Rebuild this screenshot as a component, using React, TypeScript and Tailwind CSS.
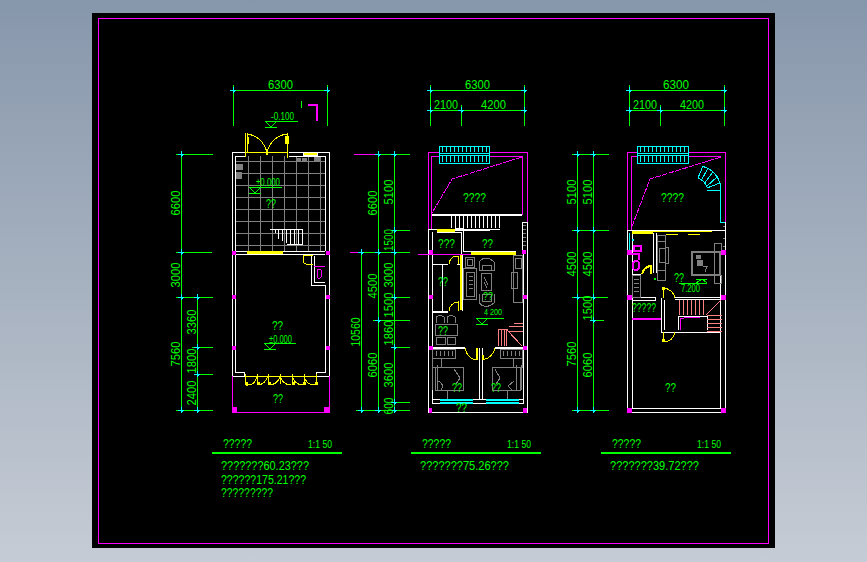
import React from 'react';

const GREEN = '#00ff00';
const CYAN = '#00ffff';
const MAGENTA = '#ff00ff';
const YELLOW = '#ffff00';
const WHITE = '#ffffff';
const GRAY = '#808080';
const PINK = '#ff8080';

function P({ d, c, w = 1, dash }: { d: string; c: string; w?: number; dash?: string }) {
  return <path d={d} stroke={c} strokeWidth={w} strokeDasharray={dash} fill="none" />;
}

function Box({ x, y, w, h, c }: { x: number; y: number; w: number; h: number; c: string }) {
  return <rect x={x} y={y} width={w} height={h} fill={c} />;
}

// horizontal text, x is the left edge and y the baseline
function T({ x, y, w, s = 13, children }: { x: number; y: number; w: number; s?: number; children: string }) {
  return (
    <text x={x} y={y} fontSize={s} fill={GREEN} textLength={w} lengthAdjust="spacingAndGlyphs">
      {children}
    </text>
  );
}

// rotated dimension text
function R({ x, y, len = 25, s = 13, children }: { x: number; y: number; len?: number; s?: number; children: string }) {
  return (
    <text
      x={x}
      y={y + s * 0.36}
      fontSize={s}
      fill={GREEN}
      textAnchor="middle"
      textLength={len}
      lengthAdjust="spacingAndGlyphs"
      transform={`rotate(-90 ${x} ${y})`}
    >
      {children}
    </text>
  );
}

function Ticks({ pts }: { pts: number[][] }) {
  return (
    <g>
      {pts.map(([x, y], i) => (
        <g key={i}>
          <P d={`M${x - 3} ${y}H${x + 3}M${x} ${y - 3}V${y + 3}`} c={CYAN} />
          <Box x={x} y={y} w={2} h={2} c={CYAN} />
        </g>
      ))}
    </g>
  );
}

function Level({ x, y, w }: { x: number; y: number; w: number }) {
  return (
    <P c={GREEN} d={`M${x} ${y}H${x + w}M${x} ${y}L${x + 6} ${y + 6}L${x + 12} ${y}M${x} ${y + 6}H${x + 12}`} />
  );
}

function AwningWindow({ x, w }: { x: number; w: number }) {
  const stripes = [];
  for (let i = x + 3; i < x + w - 2; i += 4) stripes.push(i);
  return (
    <g>
      <rect x={x} y={146} width={w} height={17} fill="#000" stroke={CYAN} />
      <P c={CYAN} d={`M${x} 153H${x + w}M${x} 155H${x + w}`} />
      <P c={CYAN} d={stripes.map((i) => `M${i} 147V152M${i} 156V162`).join('')} />
    </g>
  );
}

function Title({ x, lineX, scaleX }: { x: number; lineX: number; scaleX: number }) {
  return (
    <g>
      <T x={x} y={448} w={29}>?????</T>
      <T x={scaleX} y={448} w={24} s={11}>1:1 50</T>
      <Box x={lineX} y={452} w={130} h={2} c={GREEN} />
    </g>
  );
}

function LeftPlan() {
  return (
    <g>
      {/* floor tiles */}
      <P
        c={GRAY}
        d="M248 156V251M260 156V251M272 156V251M284 156V251M296 156V251M308 156V251M320 156V251M236 161H325M236 173H325M236 185H325M236 197H325M236 209H325M236 221H325M236 233H325M236 245H325"
      />
      <Box x={236} y={164} w={7} h={6} c={GRAY} />
      <Box x={236} y={172} w={6} h={7} c={GRAY} />
      <Box x={296} y={158} w={5} h={4} c={GRAY} />
      <Box x={302} y={158} w={5} h={3} c={GRAY} />
      <Box x={314} y={157} w={7} h={5} c={GRAY} />
      {/* walls */}
      <P
        c={WHITE}
        d="M245 152H232V376M245 156H235V372H244V376M289 152H329V376M289 156H325V251M235 251H325M235 254H325M325 285V372H316V376M232 376H329M311 256V285H325M314 256V282H325"
      />
      <Box x={303} y={152} w={15} h={4} c={WHITE} />
      <Box x={304} y={153} w={13} h={2} c={YELLOW} />
      <Box x={247} y={251} w={36} h={3} c={YELLOW} />
      {/* entry door */}
      <P
        c={YELLOW}
        d="M245 133V157M247 133V152M246 152H288M287 133V158M247 134Q262 136 267 152M287 134Q272 136 267 152"
      />
      <Box x={247} y={137} w={2} h={7} c={YELLOW} />
      <Box x={285} y={136} w={4} h={8} c={YELLOW} />
      <Box x={266} y={149} w={2} h={6} c={YELLOW} />
      {/* stair */}
      <P
        c={WHITE}
        d="M270 229H303M287 244H303M275 229V233M278 229V239M282 229V241M286 229V243M290 229V244M294 229V244M298 229V244M302 229V244"
      />
      {/* bath */}
      <P c={YELLOW} d="M303 255H313M303 255V261Q304 265 313 265" />
      <P c={MAGENTA} d="M314 266H325" />
      <rect x={317} y={269} width={4} height={9} rx={1} stroke={MAGENTA} fill="none" />
      {/* terrace */}
      <P c={MAGENTA} d="M232 376V412H329V376" />
      <Box x={232} y={407} w={5} h={5} c={MAGENTA} />
      <Box x={324} y={407} w={5} h={5} c={MAGENTA} />
      {[251, 295, 346].map((y) => (
        <g key={y}>
          <Box x={232} y={y} w={4} h={4} c={MAGENTA} />
          <Box x={326} y={y} w={4} h={4} c={MAGENTA} />
        </g>
      ))}
      {/* folding doors */}
      <P
        c={YELLOW}
        d="M245 376H316M245 374V384M257 374V384M268 374V384M280 374V384M292 374V384M304 374V384M316 374V384M246 385Q255 386 257 376M257 385Q265 385 268 376M268 385Q278 385 280 376M280 376Q283 385 291 385M292 376Q295 385 303 385M304 376Q306 385 315 385"
      />
      {[245, 257, 268, 292, 303, 315].map((x) => (
        <Box key={x} x={x} y={382} w={3} h={3} c={YELLOW} />
      ))}
      {/* levels and labels */}
      <T x={271} y={120} w={23} s={10}>-0.100</T>
      <Level x={265} y={121} w={33} />
      <P c={GREEN} d="M301 101V108" />
      <P c={MAGENTA} w={2} d="M308 105H317V121" />
      <T x={256} y={186} w={24} s={10}>±0.000</T>
      <Level x={249} y={187} w={33} />
      <T x={266} y={208} w={10}>??</T>
      <T x={272} y={330} w={11}>??</T>
      <T x={269} y={343} w={23} s={10}>±0.000</T>
      <Level x={264} y={343} w={32} />
      <T x={273} y={403} w={10}>??</T>
      {/* dimensions */}
      <P c={GREEN} d="M233 90H327M233 85V126M327 85V126" />
      <T x={268} y={89} w={25}>6300</T>
      <P
        c={GREEN}
        d="M181 151V412M197 295V412M176 154H213M176 252H212M176 297H213M192 347H213M197 374H213M176 410H213"
      />
      <Ticks pts={[[233, 90], [327, 90], [181, 154], [181, 252], [181, 297], [197, 297], [197, 347], [197, 374], [181, 410], [197, 410]]} />
      <R x={175} y={203}>6600</R>
      <R x={175} y={275}>3000</R>
      <R x={175} y={354}>7560</R>
      <R x={191} y={322}>3360</R>
      <R x={191} y={361}>1800</R>
      <R x={191} y={393}>2400</R>
      <Title x={223} lineX={212} scaleX={308} />
      <T x={221} y={470} w={88} s={12}>???????60.23???</T>
      <T x={221} y={484} w={85} s={12}>??????175.21???</T>
      <T x={221} y={497} w={52} s={12}>?????????</T>
    </g>
  );
}

function MiddlePlan() {
  return (
    <g>
      {/* balcony */}
      <P c={MAGENTA} d="M428 229V152H527V222M431 229V156H522V215" />
      <AwningWindow x={439} w={50} />
      <P c={MAGENTA} dash="6 1" d="M522 157L452 179L432 213" />
      <Box x={432} y={214} w={90} h={2} c={WHITE} />
      <P
        c={WHITE}
        d="M451 215V228M455 215V228M459 215V228M463 215V228M467 215V228M471 215V228M475 215V228M479 215V228M483 215V228M487 215V228M491 215V228M495 215V228M499 215V228M451 229H500M451 230H490"
      />
      {/* walls */}
      <P
        c={WHITE}
        d="M437 229H428V412H527V222H522V252M527 250V412M432 232V403H523V252M437 232H461V254M455 228H463V251H516M462 254V311M442 264V311M432 264H448M457 264H462M432 311H448M433 312H448M432 347H465M432 348H465M495 347H523M495 348H523M479 348V399M482 348V399M440 399H432M473 399H486M473 403H486M519 399H523"
      />
      <P c={GRAY} d="M523 225H526M523 229H526M523 233H526M523 237H526M523 241H526M523 245H526" />
      <Box x={437} y={229} w={18} h={3} c={YELLOW} />
      <Box x={471} y={252} w={45} h={3} c={YELLOW} />
      <P c={MAGENTA} d="M418 254H471" />
      <P c={MAGENTA} d="M350 252H361M354 154H378" />
      {/* doors */}
      <Box x={460} y={255} w={2} h={55} c={YELLOW} />
      <P
        c={YELLOW}
        d="M449 264Q450 257 456 256H458V264M449 311Q450 303 458 302V311M465 348Q467 358 476 360M482 360Q493 358 495 348"
      />
      <Box x={476} y={348} w={2} h={12} c={YELLOW} />
      <Box x={482} y={355} w={2} h={5} c={YELLOW} />
      {/* living room */}
      <P
        c={GRAY}
        d="M465 257H474V267H465ZM467 259H472V265H467ZM463 268H476V299H463ZM466 272H474V296H466ZM479 262Q486 254 494 262V270H479ZM482 265H491V270H482ZM481 273H491V290H481ZM479 294V303Q486 310 494 303V294M482 294H491V301H482ZM513 255H522V302H513ZM511 272H517V288H511ZM515 258H521V268H515Z"
      />
      <P c={GRAY} d="M469 276H473M469 280H473M469 284H473M469 288H473M484 277L488 285M484 282L487 288" />
      <T x={483} y={300} w={10} s={11}>??</T>
      <T x={438} y={286} w={10}>??</T>
      <T x={484} y={315} w={18} s={9}>4 200</T>
      <Level x={476} y={318} w={28} />
      {/* dining */}
      <P
        c={GRAY}
        d="M435 324H457V335H435ZM436 323V317Q440 314 444 317V323M447 323V317Q451 314 455 317V323M436 337H445V344H436ZM447 337H455V344H447Z"
      />
      <T x={438} y={335} w={10}>??</T>
      {/* stair */}
      <P
        c={PINK}
        d="M498 346V329M501 346V329M504 346V329M506 346V329M498 329H508M509 326H523M514 323H523M508 331H523M507 330L522 346"
      />
      {/* bedrooms */}
      <P
        c={GRAY}
        d="M432 349H455V358H432ZM436 351V356M440 351V356M444 351V356M448 351V356M452 351V356M432 358H441V367H432ZM435 367H463V390H435ZM437 365V390M432 365V390M454 369L460 378L456 384M438 381Q445 384 441 390M447 390V399M500 349H522V358H500ZM503 351V356M507 351V356M511 351V356M515 351V356M519 351V356M513 358H522V367H513ZM492 367H520V390H492ZM516 365V390M521 365V390M495 369L500 378L496 384M507 390V399M514 381L508 386L512 390"
      />
      <T x={452} y={392} w={10}>??</T>
      <T x={491} y={392} w={10}>??</T>
      <P c={CYAN} d="M440 399H473M440 400H473M440 402H473M440 403H473M486 399H519M486 400H519M486 402H519M486 403H519" />
      <T x={456} y={412} w={11}>??</T>
      {[[429, 250], [522, 250], [429, 295], [523, 295], [429, 346], [523, 346]].map(([x, y]) => (
        <Box key={`${x}-${y}`} x={x} y={y} w={4} h={4} c={MAGENTA} />
      ))}
      <Box x={429} y={408} w={3} h={5} c={MAGENTA} />
      <Box x={523} y={408} w={4} h={5} c={MAGENTA} />
      <T x={463} y={202} w={23}>????</T>
      <T x={438} y={248} w={17}>???</T>
      <T x={482} y={248} w={11}>??</T>
      {/* dimensions */}
      <P c={GREEN} d="M430 90H524M430 110H524M430 85V126M524 85V126M461 105V126" />
      <T x={465} y={89} w={25}>6300</T>
      <T x={434} y={109} w={24}>2100</T>
      <T x={481} y={109} w={25}>4200</T>
      <P
        c={GREEN}
        d="M361 250V412M378 151V412M394 151V412M378 154H410M394 230H410M361 252H410M394 297H410M373 320H410M394 347H410M394 402H410M356 410H410"
      />
      <Ticks pts={[[430, 90], [524, 90], [430, 110], [461, 110], [524, 110], [378, 154], [394, 154], [394, 230], [361, 252], [378, 252], [394, 252], [394, 297], [378, 320], [394, 347], [394, 402], [361, 410], [378, 410], [394, 410]]} />
      <R x={372} y={203}>6600</R>
      <R x={388} y={192}>5100</R>
      <R x={388} y={240} len={22}>1500</R>
      <R x={372} y={286}>4500</R>
      <R x={388} y={275}>3000</R>
      <R x={388} y={305}>1500</R>
      <R x={388} y={333}>1860</R>
      <R x={372} y={365}>6060</R>
      <R x={388} y={375}>3600</R>
      <R x={388} y={406} len={17}>600</R>
      <R x={355} y={332} len={29}>10560</R>
      <Title x={422} lineX={411} scaleX={507} />
      <T x={420} y={470} w={89} s={12}>???????75.26???</T>
    </g>
  );
}

function RightPlan() {
  return (
    <g>
      <P c={MAGENTA} d="M627 230V152H725V222M631 230V156H721" />
      <AwningWindow x={637} w={51} />
      <P c={MAGENTA} dash="6 1" d="M721 157L650 179L631 229" />
      {/* spiral stair */}
      <P
        c={CYAN}
        d="M702 166Q716 170 720 183M698 178Q704 180 707 187M703 166L698 178M708 168L701 181M713 172L704 184M717 177L706 187M720 183L707 188M707 190H720M720 183V222H725"
      />
      <P c={GRAY} d="M723 226H725M723 230H725M723 238H725M723 246H725" />
      {/* walls */}
      <P
        c={WHITE}
        d="M627 230H725M627 230V412H725V222M632 233V408H720V252M632 297H655V300H632M653 233V273M656 233V273M632 274H641M675 297H720M675 299H720M661 298V332H720M664 300V330M678 330V316H707V330M661 332H720M632 408H720"
      />
      <Box x={632} y={231} w={21} h={3} c={YELLOW} />
      <P c={YELLOW} d="M653 231H712M666 234H678M688 234H700" />
      <P c={CYAN} d="M629 233V250" />
      <Box x={632} y={239} w={2} h={2} c={CYAN} />
      {/* bath */}
      <P c={MAGENTA} w={2} d="M632 254H639V260" />
      <rect x={634} y={246} width={7} height={5} stroke={MAGENTA} strokeWidth={2} fill="none" />
      <rect x={633} y={261} width={6} height={9} rx={3} stroke={MAGENTA} strokeWidth={2} fill="none" />
      <P c={YELLOW} w={2} d="M642 274Q644 267 650 266H651V274" />
      <P
        c={GRAY}
        d="M632 275H640V297H632ZM634 279H639M634 283H639M634 287H639M634 291H639M657 235H665V247H668V263H665V280H657ZM659 248H665V262H659ZM657 241H665M657 270H665"
      />
      <Box x={654} y={278} w={2} h={2} c={GREEN} />
      {/* bedroom */}
      <rect x={692} y={252} width={28} height={23} stroke={GRAY} strokeWidth={2} fill="none" />
      <P c={GRAY} d="M714 243H721V251H714ZM714 251V275M719 251V275M714 275H721V283H714ZM707 266L705 272M703 266H708" />
      <Box x={696} y={255} w={5} h={4} c={GRAY} />
      <Box x={697} y={260} w={6} h={6} c={GRAY} />
      {/* stair */}
      <P
        c={PINK}
        d="M679 300V315M683 300V315M687 300V315M691 300V315M695 300V315M699 300V315M703 300V315M707 315H722M707 319H722M707 323H722M707 327H722M707 331H722M706 315L721 300"
      />
      <P c={MAGENTA} d="M680 330V318H684M684 317H700" />
      <Box x={632} y={318} w={29} h={2} c={MAGENTA} />
      {/* doors */}
      <P c={YELLOW} d="M663 288Q673 289 675 298M663 288V298M663 340V332M663 342Q673 342 675 332" />
      <Box x={662} y={287} w={3} h={3} c={YELLOW} />
      <Box x={662} y={339} w={3} h={3} c={YELLOW} />
      {[[627, 250], [721, 250], [627, 295], [721, 295]].map(([x, y]) => (
        <Box key={`${x}-${y}`} x={x} y={y} w={5} h={5} c={MAGENTA} />
      ))}
      <Box x={627} y={408} w={5} h={5} c={MAGENTA} />
      <Box x={721} y={408} w={5} h={5} c={MAGENTA} />
      {/* labels */}
      <T x={661} y={202} w={23}>????</T>
      <T x={674} y={282} w={10}>??</T>
      <P c={GREEN} d="M679 283H707M696 283L702 279L707 283M696 279H707" />
      <T x={681} y={292} w={19} s={10}>7.200</T>
      <T x={632} y={312} w={24}>?????</T>
      <T x={665} y={392} w={11}>??</T>
      {/* dimensions */}
      <P c={GREEN} d="M629 90H724M629 110H724M629 85V126M724 85V126M660 105V126" />
      <T x={663} y={89} w={26}>6300</T>
      <T x={633} y={109} w={24}>2100</T>
      <T x={680} y={109} w={24}>4200</T>
      <P
        c={GREEN}
        d="M577 151V412M593 151V412M572 154H609M572 230H609M572 297H608M590 320H604M572 410H609"
      />
      <Ticks pts={[[629, 90], [724, 90], [629, 110], [660, 110], [724, 110], [577, 154], [593, 154], [577, 230], [593, 230], [577, 297], [593, 297], [593, 320], [577, 410], [593, 410]]} />
      <R x={571} y={192}>5100</R>
      <R x={587} y={192}>5100</R>
      <R x={571} y={264}>4500</R>
      <R x={587} y={264}>4500</R>
      <R x={587} y={308}>1500</R>
      <R x={571} y={354}>7560</R>
      <R x={587} y={365}>6060</R>
      <Title x={612} lineX={601} scaleX={697} />
      <T x={610} y={470} w={89} s={12}>???????39.72???</T>
    </g>
  );
}

export default function App() {
  return (
    <div className="h-[562px] overflow-hidden bg-gradient-to-b from-[#8797ab] to-[#c6ccd5] pl-[92px] pt-[13px]">
      <div className="h-[535px] w-[683px] bg-black">
        <svg
          viewBox="92 13 683 535"
          width={683}
          height={535}
          shapeRendering="crispEdges"
          className="block font-['Liberation_Sans',sans-serif]"
        >
          <rect x={98.5} y={18.5} width={670} height={525} fill="none" stroke={MAGENTA} />
          <LeftPlan />
          <MiddlePlan />
          <RightPlan />
        </svg>
      </div>
    </div>
  );
}
